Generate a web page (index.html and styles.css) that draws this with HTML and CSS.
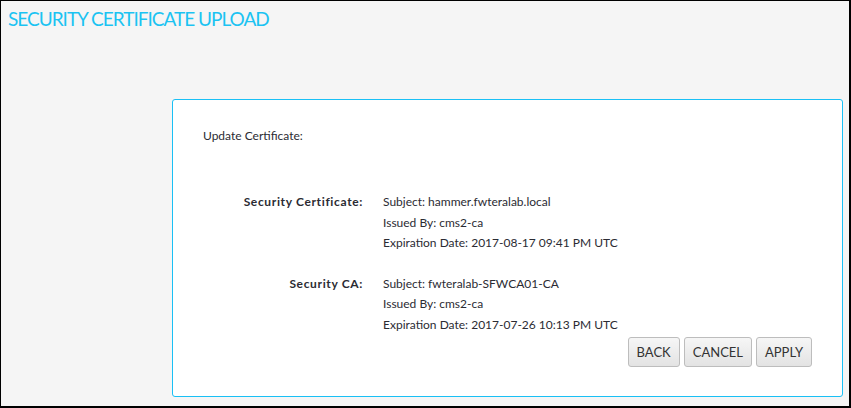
FILE: index.html
```html
<!DOCTYPE html>
<html lang="en">
<head>
    <meta charset="UTF-8">
    <title>Security Certificate Upload</title>
    <link rel="stylesheet" href="styles.css">
</head>
<body>
    <div class="page">
        <h1 class="page-title">SECURITY CERTIFICATE UPLOAD</h1>
        <div class="panel">
            <p class="intro">Update Certificate:</p>

            <div class="cert-row">
                <div class="cert-label">Security Certificate:</div>
                <div class="cert-info">
                    <div>Subject: hammer.fwteralab.local</div>
                    <div>Issued By: cms2-ca</div>
                    <div>Expiration Date: 2017-08-17 09:41 PM UTC</div>
                </div>
            </div>

            <div class="cert-row">
                <div class="cert-label">Security CA:</div>
                <div class="cert-info">
                    <div>Subject: fwteralab-SFWCA01-CA</div>
                    <div>Issued By: cms2-ca</div>
                    <div>Expiration Date: 2017-07-26 10:13 PM UTC</div>
                </div>
            </div>

            <div class="actions">
                <button type="button" class="btn">BACK</button>
                <button type="button" class="btn">CANCEL</button>
                <button type="button" class="btn">APPLY</button>
            </div>
        </div>
    </div>
</body>
</html>
```

FILE: styles.css
```css
body {
    margin: 0;
    font-family: 'Lato', 'Liberation Sans', sans-serif;
    color: #2b2b33;
}

.page {
    box-sizing: border-box;
    height: 408px;
    border: 1px solid #000;
    border-right-width: 2px;
    border-bottom-width: 2px;
    background-color: #f5f5f5;
    display: flex;
    flex-direction: column;
}

.page-title {
    margin: 0;
    padding: 6px 0 0 7px;
    height: 98px;
    box-sizing: border-box;
    font-size: 19px;
    font-weight: normal;
    letter-spacing: -1px;
    color: #1bc3f2;
}

.panel {
    box-sizing: border-box;
    height: 298px;
    margin: 0 6px 0 171px;
    padding: 0 30px;
    background-color: #ffffff;
    border: 1px solid #1ac0f5;
    border-radius: 3px;
    font-size: 12px;
    display: flex;
    flex-direction: column;
}

.intro {
    margin: 28px 0 0 0;
    line-height: 16px;
}

.cert-row {
    display: flex;
    gap: 20px;
    margin-top: 48px;
}

.cert-row + .cert-row {
    margin-top: 20px;
}

.cert-label {
    width: 160px;
    text-align: right;
    font-weight: bold;
    letter-spacing: 0.65px;
    line-height: 20px;
}

.cert-info {
    line-height: 20.5px;
}

.actions {
    display: flex;
    justify-content: flex-end;
    gap: 4px;
    margin-top: 2px;
}

.btn {
    height: 30px;
    padding: 0 8px;
    font-family: inherit;
    font-size: 13px;
    color: #333;
    background: linear-gradient(#f6f6f6, #e3e3e3);
    border: 1px solid #bdbdbd;
    border-radius: 3px;
}
```
